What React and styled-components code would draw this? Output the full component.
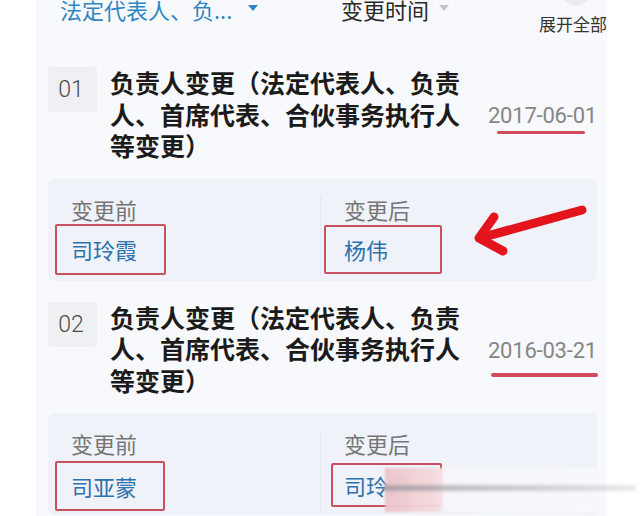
import React from "react";
import styled, { createGlobalStyle } from "styled-components";

const GlobalStyle = createGlobalStyle`
  html, body { margin: 0; padding: 0; background: #fff; }
  body { font-family: "Noto Sans CJK SC", "Noto Sans", sans-serif; overflow: hidden; }
  * { box-sizing: border-box; }
`;

const Page = styled.div`
  position: relative;
  width: 640px;
  height: 516px;
  overflow: hidden;
  background: #fff;
  padding-left: 36px;
`;

const Column = styled.div`
  width: 571px;
  height: 100%;
  background: #f8f9fc;
  overflow: hidden;
`;

const Header = styled.div`
  display: flex;
  align-items: flex-start;
  height: 67px;
  padding-left: 24px;
`;

const Filter = styled.div`
  display: flex;
  align-items: center;
  flex-shrink: 0;
  gap: ${(p) => p.$gap}px;
  width: ${(p) => p.$w}px;
  margin-top: -4px;
  font-size: 22px;
  line-height: 26px;
  color: ${(p) => (p.$active ? "#2f86c2" : "#2a2a2a")};
  white-space: nowrap;
`;

const Caret = styled.span`
  width: 0;
  height: 0;
  border-left: 5px solid transparent;
  border-right: 5px solid transparent;
  border-top: 6px solid ${(p) => (p.$active ? "#2f86c2" : "#c4c4c4")};
  margin-top: -2px;
`;

const Expand = styled.div`
  display: flex;
  flex-direction: column;
  align-items: center;
  flex-shrink: 0;
  width: 70px;
`;

const Knob = styled.span`
  width: 28px;
  height: 24px;
  margin-top: -20px;
  margin-left: 6px;
  border-radius: 50%;
  background: #ececef;
  box-shadow: 0 1px 2px rgba(0, 0, 0, 0.08);
`;

const ExpandLabel = styled.span`
  margin-top: 10px;
  font-size: 17px;
  line-height: 20px;
  color: #333;
  white-space: nowrap;
`;

const Card = styled.section`
  padding: 0 10px 0 12px;
  & + & { margin-top: 21px; }
`;

const Row = styled.div`
  display: flex;
  align-items: flex-start;
`;

const NumBox = styled.div`
  flex-shrink: 0;
  width: 49px;
  height: 45px;
  border-radius: 4px;
  background: #eff0f4;
  display: flex;
  align-items: center;
  justify-content: center;
  padding-right: 3px;
  font-family: Roboto, "Noto Sans", sans-serif;
  font-weight: 300;
  font-size: 23px;
  color: #4a4a4a;
`;

const Title = styled.h3`
  margin: 0 0 0 13px;
  width: 360px;
  flex-shrink: 0;
  font-size: 25px;
  line-height: 31.5px;
  font-weight: 700;
  color: #1b1b1b;
`;

const DateBlock = styled.div`
  position: relative;
  align-self: center;
  margin-left: auto;
  margin-top: 4px;
`;

const DateText = styled.span`
  display: block;
  font-family: Roboto, "Noto Sans", sans-serif;
  font-size: 22px;
  line-height: 24px;
  letter-spacing: -0.2px;
  color: #868686;
`;

const Mark = styled.span`
  position: absolute;
  left: ${(p) => p.$x}px;
  top: ${(p) => p.$y}px;
  width: ${(p) => p.$w}px;
  height: ${(p) => p.$h}px;
  border-radius: 2px;
  background: #cf4a5d;
`;

const Detail = styled.div`
  margin-top: 17px;
  display: grid;
  grid-template-columns: 272px 1fr;
  height: 102px;
  padding: 17px 0 6px;
  border-radius: 6px;
  background: #eff2f8;
`;

const Cell = styled.div`
  position: relative;
  display: flex;
  flex-direction: column;
  & + & { border-left: 1px solid #e4e7ee; }
`;

const Label = styled.span`
  margin-left: 23px;
  font-size: 22px;
  line-height: 26px;
  color: #767676;
`;

const NameBox = styled.div`
  display: flex;
  align-items: center;
  width: ${(p) => p.$w}px;
  height: ${(p) => p.$h}px;
  margin-left: ${(p) => p.$x}px;
  margin-top: ${(p) => p.$y}px;
  padding-left: ${(p) => 21 - p.$x}px;
  border: 2px solid #c9505f;
  border-radius: 2px;
  font-size: 22px;
  line-height: 26px;
  color: #2d72ad;
  white-space: nowrap;
  overflow: hidden;
`;

const Arrow = styled.svg`
  position: absolute;
  left: 470px;
  top: 200px;
  width: 125px;
  height: 60px;
  overflow: visible;
`;

const Smear = styled.div`
  position: absolute;
  left: 385px;
  top: 468px;
  width: 215px;
  height: 44px;
  background: linear-gradient(
    to right,
    rgba(236, 196, 202, 0.97) 0,
    rgba(244, 218, 222, 0.95) 54px,
    rgba(246, 246, 250, 0.98) 60px,
    rgba(247, 248, 251, 0.98) 100%
  );
  filter: blur(1px);
`;

const SmearLine = styled.div`
  position: absolute;
  left: 384px;
  top: 485px;
  width: 252px;
  height: 6px;
  background: linear-gradient(to right, rgba(150, 150, 155, 0.7), rgba(200, 200, 205, 0.4));
  filter: blur(1.5px);
`;

const records = [
  {
    no: "01",
    date: "2017-06-01",
    mark: { x: 9, y: 27, w: 88, h: 3 },
    before: { name: "司玲霞", box: { x: 7, y: 2, w: 111, h: 51 } },
    after: { name: "杨伟", box: { x: 3, y: 3, w: 118, h: 49 } },
  },
  {
    no: "02",
    date: "2016-03-21",
    mark: { x: 3, y: 34, w: 107, h: 4 },
    before: { name: "司亚蒙", box: { x: 7, y: 5, w: 110, h: 50 } },
    after: { name: "司玲霞", box: { x: 10, y: 7, w: 111, h: 44 } },
  },
];

const TITLE = "负责人变更（法定代表人、负责人、首席代表、合伙事务执行人等变更）";

function Record({ r }) {
  return (
    <Card>
      <Row>
        <NumBox>{r.no}</NumBox>
        <Title>{TITLE}</Title>
        <DateBlock>
          <DateText>{r.date}</DateText>
          <Mark $x={r.mark.x} $y={r.mark.y} $w={r.mark.w} $h={r.mark.h} />
        </DateBlock>
      </Row>
      <Detail>
        <Cell>
          <Label>变更前</Label>
          <NameBox $x={r.before.box.x} $y={r.before.box.y} $w={r.before.box.w} $h={r.before.box.h}>
            {r.before.name}
          </NameBox>
        </Cell>
        <Cell>
          <Label>变更后</Label>
          <NameBox $x={r.after.box.x} $y={r.after.box.y} $w={r.after.box.w} $h={r.after.box.h}>
            {r.after.name}
          </NameBox>
        </Cell>
      </Detail>
    </Card>
  );
}

export default function App() {
  return (
    <>
      <GlobalStyle />
      <Page>
        <Column>
          <Header>
            <Filter $active $w={281} $gap={16}>
              法定代表人、负...
              <Caret $active />
            </Filter>
            <Filter $w={197} $gap={10}>
              变更时间
              <Caret />
            </Filter>
            <Expand>
              <Knob />
              <ExpandLabel>展开全部</ExpandLabel>
            </Expand>
          </Header>
          {records.map((r) => (
            <Record key={r.no} r={r} />
          ))}
        </Column>
        <Arrow viewBox="0 0 125 60">
          <g fill="none" stroke="#e3141c" strokeWidth="9" strokeLinecap="round" strokeLinejoin="round">
            <path d="M112 10 L10 38" />
            <path d="M24 17 L9 38 L33 51" />
          </g>
        </Arrow>
        <Smear />
        <SmearLine />
      </Page>
    </>
  );
}
